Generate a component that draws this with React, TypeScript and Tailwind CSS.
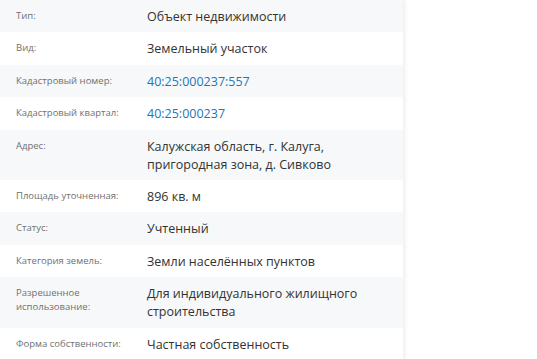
import React from "react";

type Row = { label: string; value: string; link?: boolean };

const rows: Row[] = [
  { label: "Тип:", value: "Объект недвижимости" },
  { label: "Вид:", value: "Земельный участок" },
  { label: "Кадастровый номер:", value: "40:25:000237:557", link: true },
  { label: "Кадастровый квартал:", value: "40:25:000237", link: true },
  { label: "Адрес:", value: "Калужская область, г. Калуга, пригородная зона, д. Сивково" },
  { label: "Площадь уточненная:", value: "896 кв. м" },
  { label: "Статус:", value: "Учтенный" },
  { label: "Категория земель:", value: "Земли населённых пунктов" },
  { label: "Разрешенное использование:", value: "Для индивидуального жилищного строительства" },
  { label: "Форма собственности:", value: "Частная собственность" },
];

export default function App() {
  return (
    <div className="w-[537px] h-[359px] overflow-hidden bg-white" style={{ fontFamily: '"Open Sans", "Noto Sans", sans-serif' }}>
      <div className="w-[403px] shadow-[2px_0_4px_rgba(0,0,0,0.07)] bg-white">
        {rows.map((r, i) => (
          <div key={i} className={`flex pt-[8px] pb-[6.4px] ${i % 2 === 0 ? "bg-[#f7f8fa]" : "bg-white"}`}>
            <div className="w-[147px] shrink-0 pl-4 pr-3 pt-[1px] text-[9.5px] leading-[14px] text-[#707070]">{r.label}</div>
            <div className={`pr-6 text-[12.5px] leading-[18px] ${r.link ? "text-[#1f76b5]" : "text-[#333333]"}`}>
              {r.value}
            </div>
          </div>
        ))}
      </div>
    </div>
  );
}
